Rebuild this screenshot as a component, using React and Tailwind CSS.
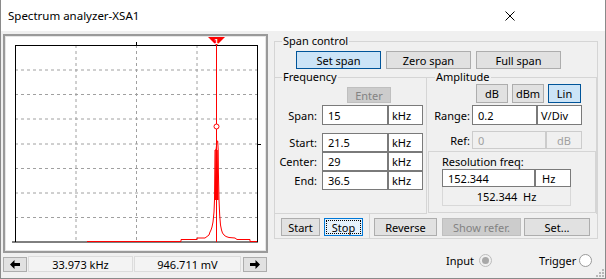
import React from "react";

function Btn({ className = "", kind = "normal", children }) {
  const k =
    kind === "sel"
      ? "bg-[#cce4f7] border-[#005499] text-black"
      : kind === "dis"
      ? "bg-[#cccccc] border-[#bfbfbf] text-[#838383]"
      : "bg-[#e1e1e1] border-[#adadad] text-black";
  return (
    <div className={`flex items-center justify-center border text-[11px] leading-none ${k} ${className}`}>
      {children}
    </div>
  );
}

function Field({ className = "", children, dis = false, pad = "pl-[5px]" }) {
  return (
    <div
      className={`flex items-center border text-[11px] leading-none ${pad} ${
        dis ? "bg-[#f0f0f0] border-[#cccccc] text-[#a0a0a0]" : "bg-white border-[#7a7a7a] text-black"
      } ${className}`}
    >
      {children}
    </div>
  );
}

function Plot() {
  const hs = [70, 94.5, 119, 144, 168.5, 193, 217.5];
  const vs = [76, 136.5, 197];
  const spec =
    "87,241.5 181,241.5 181,239.5 197,239.5 197,238 205,238 207,236.5 209,235 210,232 211,230 212,227 213,222 214,212 214.5,200 215,150 216,150 217,141 217.7,141 218.2,150 218.4,172 219,200 219.7,215 220.5,225 221.5,230 222.5,233 224,235 226,236.5 229,237.5 235,238 237,239.5 250,239.5 250,241.5 257,241.5";
  return (
    <svg width="259" height="213" viewBox="6 37 259 213" className="block bg-white">
      {hs.map((y) => (
        <line key={"h" + y} x1="15" x2="257" y1={y} y2={y} stroke="#a0a0a0" strokeWidth="1" strokeDasharray="3 3" />
      ))}
      {vs.map((x) => (
        <line key={"v" + x} x1={x} x2={x} y1="45" y2="242" stroke="#a0a0a0" strokeWidth="1" strokeDasharray="3 3" />
      ))}
      <line x1="15.5" x2="15.5" y1="45" y2="242" stroke="#000" strokeWidth="1" />
      <line x1="15" x2="257.5" y1="45.5" y2="45.5" stroke="#000" strokeWidth="1" />
      <line x1="257.5" x2="257.5" y1="45" y2="242" stroke="#000" strokeWidth="1" />
      <line x1="12" x2="258" y1="242" y2="242" stroke="#000" strokeWidth="1" />
      <line x1="136.5" x2="136.5" y1="42" y2="45" stroke="#000" strokeWidth="1" />
      <line x1="257" x2="261" y1="144.5" y2="144.5" stroke="#000" strokeWidth="1" />
      <polygon points="215.3,150 217.8,150 218,172 218.6,200 214.8,200" fill="#ff0000" />
      <polyline points={spec} fill="none" stroke="#ff0000" strokeWidth="1" />
      <line x1="216.5" x2="216.5" y1="43" y2="242" stroke="#ff0000" strokeWidth="1" />
      <circle cx="216.5" cy="126.5" r="2.5" fill="#fff" stroke="#ff0000" strokeWidth="1" />
      <polygon points="208,37 225,37 216.5,45.5" fill="#ff0000" />
      <text x="216.5" y="43.5" fill="#fff" fontSize="8" fontWeight="bold" textAnchor="middle" fontFamily="Liberation Sans, sans-serif">
        1
      </text>
    </svg>
  );
}

function Arrow({ dir }) {
  return (
    <svg width="10" height="9" viewBox="0 0 10 9">
      {dir === "left" ? (
        <polygon points="0,4.5 4.5,0 4.5,3 10,3 10,6 4.5,6 4.5,9" fill="#000" />
      ) : (
        <polygon points="10,4.5 5.5,0 5.5,3 0,3 0,6 5.5,6 5.5,9" fill="#000" />
      )}
    </svg>
  );
}

function Radio({ checked, className = "" }) {
  return (
    <div
      className={`w-[13px] h-[13px] shrink-0 rounded-full border flex items-center justify-center ${
        checked ? "border-[#bcbcbc] bg-[#f0f0f0]" : "border-[#9a9a9a] bg-white"
      } ${className}`}
    >
      {checked ? <div className="w-[7px] h-[7px] rounded-full bg-[#a8a8a8]" /> : null}
    </div>
  );
}

export default function App() {
  return (
    <div className="relative w-[606px] h-[279px] bg-[#f0f0f0] border-x border-b border-[#8a8a8a] overflow-hidden font-['Noto_Sans',sans-serif] text-[11px] text-black">
      {/* title bar */}
      <div className="h-[31px] bg-white flex items-center justify-between pl-[7px] pr-[90px]">
        <span className="text-[11.5px] leading-none">Spectrum analyzer-XSA1</span>
        <svg width="10" height="10" viewBox="0 0 10 10">
          <line x1="0.5" y1="0.5" x2="9.5" y2="9.5" stroke="#000" strokeWidth="1" />
          <line x1="9.5" y1="0.5" x2="0.5" y2="9.5" stroke="#000" strokeWidth="1" />
        </svg>
      </div>

      <div className="flex">
        {/* left column */}
        <div className="ml-[2px] mt-[3px] w-[265px]">
          <div className="h-[219px] border-2 border-[#9a9a9a]">
            <div className="border border-[#e6e6e6]">
              <Plot />
            </div>
          </div>
          <div className="mt-[3px] h-[16px] flex items-end">
            <Btn className="w-[24px] h-[15px]">
              <Arrow dir="left" />
            </Btn>
            <div className="ml-[1px] w-[105px] h-[16px] flex items-center justify-center border border-[#dcdcdc] bg-[#f3f3f3] leading-none">
              33.973 kHz
            </div>
            <div className="ml-[1px] w-[107px] h-[16px] flex items-center justify-center border border-[#dcdcdc] bg-[#f3f3f3] leading-none">
              946.711 mV
            </div>
            <Btn className="ml-[2px] w-[24px] h-[15px]">
              <Arrow dir="right" />
            </Btn>
          </div>
        </div>

        {/* right column */}
        <div className="ml-[6px] mt-[10px] w-[324px]">
          <div className="relative h-[198px] border border-[#d5d5d5]">
            <span className="absolute left-[7px] top-[-8px] px-[1px] bg-[#f0f0f0] leading-[14px]">Span control</span>
            <div className="pt-[9px] pl-[21px] flex gap-[5px]">
              <Btn kind="sel" className="w-[85px] h-[18px]">Set span</Btn>
              <Btn className="w-[85px] h-[18px]">Zero span</Btn>
              <Btn className="w-[85px] h-[18px]">Full span</Btn>
            </div>

            <div className="mt-[8px] flex h-[137px]">
              {/* Frequency */}
              <div className="relative -ml-px w-[154px] h-[137px] border border-[#d5d5d5]">
                <span className="absolute left-[7px] top-[-8px] px-[1px] bg-[#f0f0f0] leading-[14px]">Frequency</span>
                <Btn kind="dis" className="mt-[9px] ml-[72px] w-[44px] h-[16px]">Enter</Btn>
                <div className="mt-[2px] flex h-[20px]">
                  <span className="w-[42px] text-right self-center leading-none">Span:</span>
                  <Field className="ml-[5px] w-[66px]">15</Field>
                  <Field className="w-[35px]" pad="pl-[3px]">kHz</Field>
                </div>
                <div className="mt-[8px] flex flex-col">
                  {[
                    ["Start:", "21.5"],
                    ["Center:", "29"],
                    ["End:", "36.5"],
                  ].map(([l, v]) => (
                    <div key={l} className="flex h-[19px]">
                      <span className="w-[42px] text-right self-center leading-none">{l}</span>
                      <Field className="ml-[5px] w-[66px]">{v}</Field>
                      <Field className="w-[35px]" pad="pl-[3px]">kHz</Field>
                    </div>
                  ))}
                </div>
              </div>

              {/* Amplitude + resolution */}
              <div className="relative w-[170px] h-[137px] border-t border-r border-[#d5d5d5]">
                <span className="absolute left-[8px] top-[-8px] px-[1px] bg-[#f0f0f0] leading-[14px]">Amplitude</span>
                <div className="mt-[6px] ml-[49px] flex gap-[4px]">
                  <Btn className="w-[32px] h-[19px]">dB</Btn>
                  <Btn className="w-[32px] h-[19px]">dBm</Btn>
                  <Btn kind="sel" className="w-[33px] h-[19px]">Lin</Btn>
                </div>
                <div className="mt-[2px] flex h-[20px]">
                  <span className="w-[43px] text-right self-center leading-none">Range:</span>
                  <Field className="ml-[2px] w-[65px]">0.2</Field>
                  <Field className="w-[45px]" pad="pl-[3px]">V/Div</Field>
                </div>
                <div className="mt-[6px] flex h-[18px]">
                  <span className="w-[43px] text-right self-center leading-none">Ref:</span>
                  <Field dis className="ml-[2px] w-[74px]">0</Field>
                  <Field dis className="w-[36px] justify-center" pad="pl-0">dB</Field>
                </div>
                <div className="mt-[2px] ml-[1px] w-[168px] h-[62px] border border-[#d5d5d5]">
                  <div className="pt-[3px] pl-[13px] leading-[14px] h-[17px]">Resolution freq:</div>
                  <div className="ml-[13px] flex h-[18px]">
                    <Field className="w-[93px]">152.344</Field>
                    <Field className="w-[36px]" pad="pl-[6px]">Hz</Field>
                  </div>
                  <div className="ml-[13px] w-[129px] h-[19px] flex items-center justify-center border border-t-0 border-[#d8d8d8] leading-none">
                    152.344&nbsp; Hz
                  </div>
                </div>
              </div>
            </div>

            {/* bottom buttons */}
            <div className="flex h-[24px]">
              <div className="flex pt-[4px]">
                <Btn className="ml-[6px] w-[39px] h-[18px]">Start</Btn>
                <div className="ml-[4px] w-[39px] h-[18px] border border-[#0078d7] bg-[#e5f1fb] p-[1px]">
                  <div className="w-full h-full border border-dotted border-black flex items-center justify-center leading-none">
                    Stop
                  </div>
                </div>
              </div>
              <div className="ml-[6px] w-px h-[24px] bg-[#d5d5d5]" />
              <div className="flex pt-[4px]">
                <Btn className="ml-[4px] w-[63px] h-[18px]">Reverse</Btn>
                <Btn kind="dis" className="ml-[5px] w-[79px] h-[18px]">Show refer.</Btn>
                <Btn className="ml-[3px] w-[66px] h-[18px]">Set...</Btn>
              </div>
            </div>
          </div>

          <div className="mt-[14px] h-[14px] flex items-center pl-[172px]">
            <span className="leading-none whitespace-nowrap">Input</span>
            <Radio checked className="ml-[5px]" />
            <span className="ml-[47px] leading-none whitespace-nowrap">Trigger</span>
            <Radio className="ml-[3px]" />
          </div>
        </div>
      </div>

      {/* resize grip */}
      <svg className="absolute right-[1px] bottom-[1px]" width="8" height="8" viewBox="0 0 8 8">
        <rect x="6" y="0" width="2" height="2" fill="#b8b8b8" />
        <rect x="3" y="3" width="2" height="2" fill="#b8b8b8" />
        <rect x="6" y="3" width="2" height="2" fill="#b8b8b8" />
        <rect x="0" y="6" width="2" height="2" fill="#b8b8b8" />
        <rect x="3" y="6" width="2" height="2" fill="#b8b8b8" />
        <rect x="6" y="6" width="2" height="2" fill="#b8b8b8" />
      </svg>
    </div>
  );
}
